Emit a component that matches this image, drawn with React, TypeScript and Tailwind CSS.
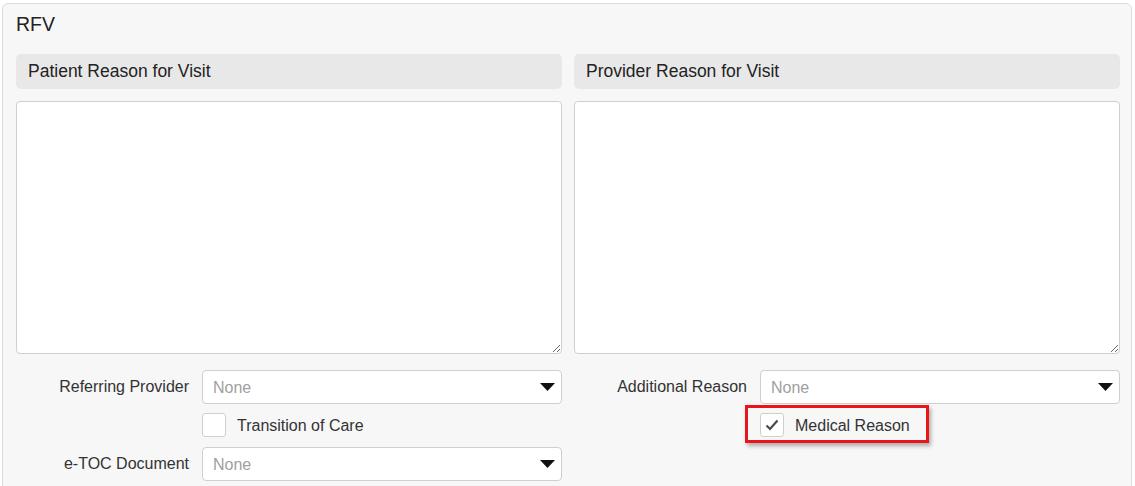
import React from 'react';

const font = { fontFamily: '"Liberation Sans", Arial, sans-serif' };

function Caret() {
  return (
    <svg width="15" height="8" viewBox="0 0 15 8" className="shrink-0">
      <path d="M0 0 L15 0 L7.5 8 Z" fill="#111" />
    </svg>
  );
}

function SelectRow({ label }: { label: string }) {
  return (
    <div className="grid grid-cols-[173px_1fr] gap-x-[13px] items-center">
      <span className="text-right text-[16px] text-[#333]">{label}</span>
      <div className="h-[34px] bg-white border border-[#cfcfcf] rounded-[4px] flex items-center justify-between pl-[10px] pr-[6px]">
        <span className="text-[16px] text-[#a0a0a0] pt-[1px]">None</span>
        <Caret />
      </div>
    </div>
  );
}

function CheckRow({ label, checked, highlight }: { label: string; checked?: boolean; highlight?: boolean }) {
  return (
    <div className="grid grid-cols-[173px_1fr] gap-x-[13px] items-center">
      <span />
      <div className="relative flex items-center gap-[11px] h-[24px]">
        {highlight && (
          <div className="absolute left-[-15px] top-[-8px] w-[184px] h-[38px] border-[3px] border-[#e8151b] shadow-[2px_3px_4px_rgba(0,0,0,0.3)]" />
        )}
        <div className="w-[24px] h-[24px] bg-white border border-[#cfcfcf] rounded-[3px] flex items-center justify-center">
          {checked && (
            <svg width="14" height="12" viewBox="0 0 14 12">
              <path d="M1.5 6.5 L5 10 L12.5 1.5" fill="none" stroke="#4a4a4a" strokeWidth="2.2" />
            </svg>
          )}
        </div>
        <span className="text-[16px] text-[#333] pt-[2px]">{label}</span>
      </div>
    </div>
  );
}

function Column({ title, children }: { title: string; children: React.ReactNode }) {
  return (
    <div className="flex flex-col">
      <div className="h-[35px] bg-[#e8e8e8] rounded-[5px] flex items-center pl-[12px] text-[17.5px] text-[#222]">
        {title}
      </div>
      <textarea className="mt-[12px] h-[253px] bg-white border border-[#cfcfcf] rounded-[4px] p-2 outline-none" />
      <div className="mt-[16px] flex flex-col">{children}</div>
    </div>
  );
}

export default function App() {
  return (
    <div className="bg-white pt-[3px] pl-[2px] pr-[3px] h-[486px] overflow-hidden" style={font}>
      <div className="border border-[#dcdcdc] rounded-t-[6px] bg-[#f7f7f7] pl-[13px] pr-[11px] pb-6">
        <h2 className="pt-[8px] leading-[24px] text-[19.5px] text-[#222] mb-[18px]">RFV</h2>
        <div className="grid grid-cols-2 gap-x-[12px]">
          <Column title="Patient Reason for Visit">
            <SelectRow label="Referring Provider" />
            <div className="mt-[9px]">
              <CheckRow label="Transition of Care" />
            </div>
            <div className="mt-[10px]">
              <SelectRow label="e-TOC Document" />
            </div>
          </Column>
          <Column title="Provider Reason for Visit">
            <SelectRow label="Additional Reason" />
            <div className="mt-[9px]">
              <CheckRow label="Medical Reason" checked highlight />
            </div>
          </Column>
        </div>
      </div>
    </div>
  );
}
